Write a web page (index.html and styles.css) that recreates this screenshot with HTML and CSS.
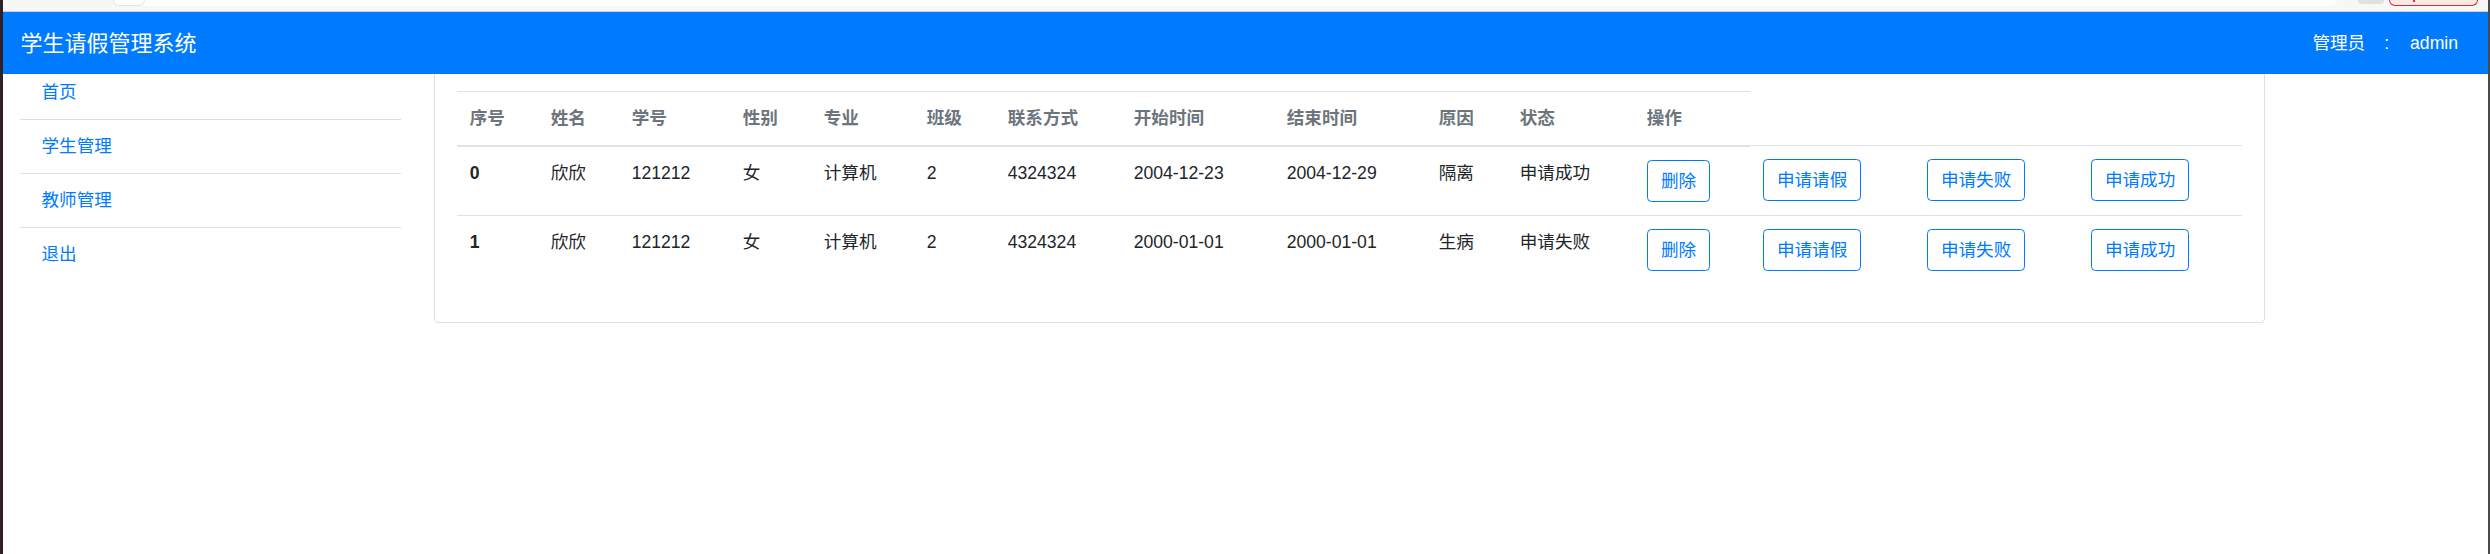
FILE: index.html
```html
<!DOCTYPE html>
<html lang="zh-CN">
<head>
<meta charset="utf-8">
<title>学生请假管理系统</title>
<link rel="stylesheet" href="styles.css">
</head>
<body>
<div class="window">
  <div class="chrome">
    <div class="chrome-bar"><span class="chrome-btn"></span></div>
    <span class="chrome-dot"></span>
    <span class="chrome-pill"><span class="chrome-pill-mark"></span></span>
  </div>
  <div class="page">
    <nav class="navbar">
      <span class="brand">学生请假管理系统</span>
      <span class="user"><span>管理员</span><span class="colon">:</span><span>admin</span></span>
    </nav>
    <div class="layout">
      <ul class="sidenav">
        <li><a class="sidenav-link">首页</a></li>
        <li><a class="sidenav-link">学生管理</a></li>
        <li><a class="sidenav-link">教师管理</a></li>
        <li><a class="sidenav-link">退出</a></li>
      </ul>
      <div class="card">
        <table class="table">
          <colgroup>
            <col class="w81"><col class="w81"><col class="w111"><col class="w81"><col class="w103"><col class="w81"><col class="w126"><col class="w153"><col class="w152"><col class="w81"><col class="w127"><col class="w116"><col class="w164"><col class="w164"><col class="w164">
          </colgroup>
          <thead>
            <tr>
              <th>序号</th><th>姓名</th><th>学号</th><th>性别</th><th>专业</th><th>班级</th><th>联系方式</th><th>开始时间</th><th>结束时间</th><th>原因</th><th>状态</th><th>操作</th>
            </tr>
          </thead>
          <tbody>
            <tr>
              <th>0</th><td>欣欣</td><td>121212</td><td>女</td><td>计算机</td><td>2</td><td>4324324</td><td>2004-12-23</td><td>2004-12-29</td><td>隔离</td><td>申请成功</td>
              <td><button class="btn">删除</button></td>
              <td><button class="btn">申请请假</button></td>
              <td><button class="btn">申请失败</button></td>
              <td><button class="btn">申请成功</button></td>
            </tr>
            <tr>
              <th>1</th><td>欣欣</td><td>121212</td><td>女</td><td>计算机</td><td>2</td><td>4324324</td><td>2000-01-01</td><td>2000-01-01</td><td>生病</td><td>申请失败</td>
              <td><button class="btn">删除</button></td>
              <td><button class="btn">申请请假</button></td>
              <td><button class="btn">申请失败</button></td>
              <td><button class="btn">申请成功</button></td>
            </tr>
          </tbody>
        </table>
      </div>
    </div>
  </div>
</div>
</body>
</html>
```
FILE: styles.css
```css
html, body {
  margin: 0;
  padding: 0;
  background: #ffffff;
}

body {
  font-family: "Liberation Sans", "Noto Sans CJK SC", sans-serif;
  font-size: 17.6px;
  line-height: 26.4px;
  color: #212529;
}

.window {
  width: 2490px;
  height: 554px;
  box-sizing: border-box;
  border-left: 3px solid #2e2228;
  border-right: 2px solid #4a4a4a;
  display: flex;
  flex-direction: column;
  overflow: hidden;
}

.chrome {
  height: 11px;
  flex: none;
  background: #f7f7f7;
  border-bottom: 1px solid #cfcfcf;
  display: flex;
  align-items: flex-start;
}

.chrome-bar {
  margin-left: 110px;
  width: 2224px;
  height: 6px;
  background: #ffffff;
  border-radius: 0 0 9px 9px;
  display: flex;
}

.chrome-btn {
  width: 30px;
  height: 5px;
  background: #ffffff;
  border: 1px solid #e4e4e4;
  border-top: 0;
  border-radius: 0 0 15px 15px;
  margin-left: 0;
}

.chrome-dot {
  margin-left: 21px;
  width: 26px;
  height: 4px;
  background: #e1e1e1;
  border-radius: 0 0 13px 13px;
}

.chrome-pill {
  margin-left: 5px;
  width: 87px;
  height: 5px;
  background: #fce8e6;
  border: 1px solid #d93025;
  border-top: 0;
  border-radius: 0 0 9px 9px;
  display: flex;
  justify-content: flex-start;
}

.chrome-pill-mark {
  margin-left: 23px;
  width: 2px;
  height: 2px;
  background: #d93025;
}

.page {
  flex: 1;
  display: flex;
  flex-direction: column;
}

.navbar {
  height: 62px;
  flex: none;
  background: #007bff;
  display: flex;
  align-items: center;
  justify-content: space-between;
  padding: 0 30px 0 17.6px;
  color: #ffffff;
}

.brand {
  font-size: 22px;
  line-height: 33px;
  color: #ffffff;
}

.user {
  font-size: 17.6px;
  line-height: 26.4px;
  color: #ffffff;
  display: flex;
}

.colon {
  margin: 0 21px 0 19px;
}

.layout {
  display: flex;
  align-items: flex-start;
  gap: 33px;
  padding: 0 16.5px;
}

.sidenav {
  list-style: none;
  margin: 0;
  padding: 0;
  width: 381px;
  flex: none;
}

.sidenav-link {
  display: block;
  padding: 13.2px 22px;
  color: #007bff;
  border-bottom: 1px solid rgba(0, 0, 0, 0.125);
}

.sidenav li:first-child .sidenav-link {
  padding-top: 5.4px;
}

.sidenav li:last-child .sidenav-link {
  border-bottom: 0;
}

.card {
  width: 1831px;
  flex: none;
  box-sizing: border-box;
  border: 1px solid rgba(0, 0, 0, 0.125);
  border-top: 0;
  border-radius: 0 0 4.4px 4.4px;
  padding: 17px 22px 38px;
}

.table {
  width: 100%;
  table-layout: fixed;
  border-collapse: collapse;
  margin: 0;
}

.w81 { width: 81px; }
.w103 { width: 103px; }
.w111 { width: 111px; }
.w116 { width: 116px; }
.w126 { width: 126px; }
.w127 { width: 127px; }
.w152 { width: 152px; }
.w153 { width: 153px; }
.w164 { width: 164px; }

.table th,
.table td {
  padding: 13.2px;
  vertical-align: top;
  text-align: left;
  border-top: 1px solid #dee2e6;
  white-space: nowrap;
}

.table thead th {
  color: #6c757d;
  font-weight: bold;
  border-bottom: 2px solid #dee2e6;
}

.table tbody th {
  font-weight: bold;
  color: #212529;
}

.btn {
  display: inline-block;
  font-family: inherit;
  font-size: 17.6px;
  line-height: 26.4px;
  padding: 6.6px 13.2px;
  color: #007bff;
  background: transparent;
  border: 1px solid #007bff;
  border-radius: 4.4px;
  margin: 0;
}
```
